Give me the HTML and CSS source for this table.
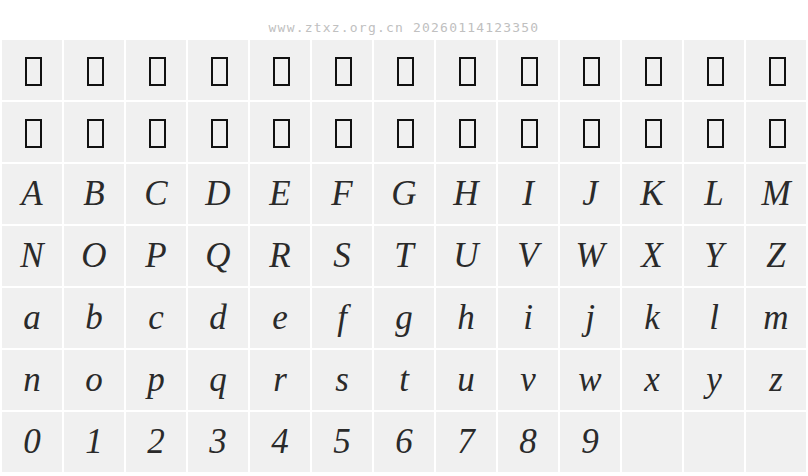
FILE: index.html
```html
<!DOCTYPE html>
<html>
<head>
<meta charset="utf-8">
<link rel="stylesheet" href="styles.css">
</head>
<body>
<header class="site">www.ztxz.org.cn 20260114123350</header>
<main class="grid">
  <div class="cell"><span class="tofu"></span></div>
  <div class="cell"><span class="tofu"></span></div>
  <div class="cell"><span class="tofu"></span></div>
  <div class="cell"><span class="tofu"></span></div>
  <div class="cell"><span class="tofu"></span></div>
  <div class="cell"><span class="tofu"></span></div>
  <div class="cell"><span class="tofu"></span></div>
  <div class="cell"><span class="tofu"></span></div>
  <div class="cell"><span class="tofu"></span></div>
  <div class="cell"><span class="tofu"></span></div>
  <div class="cell"><span class="tofu"></span></div>
  <div class="cell"><span class="tofu"></span></div>
  <div class="cell"><span class="tofu"></span></div>
  <div class="cell"><span class="tofu"></span></div>
  <div class="cell"><span class="tofu"></span></div>
  <div class="cell"><span class="tofu"></span></div>
  <div class="cell"><span class="tofu"></span></div>
  <div class="cell"><span class="tofu"></span></div>
  <div class="cell"><span class="tofu"></span></div>
  <div class="cell"><span class="tofu"></span></div>
  <div class="cell"><span class="tofu"></span></div>
  <div class="cell"><span class="tofu"></span></div>
  <div class="cell"><span class="tofu"></span></div>
  <div class="cell"><span class="tofu"></span></div>
  <div class="cell"><span class="tofu"></span></div>
  <div class="cell"><span class="tofu"></span></div>
  <div class="cell">A</div><div class="cell">B</div><div class="cell">C</div><div class="cell">D</div><div class="cell">E</div><div class="cell">F</div><div class="cell">G</div><div class="cell">H</div><div class="cell">I</div><div class="cell">J</div><div class="cell">K</div><div class="cell">L</div><div class="cell">M</div>
  <div class="cell">N</div><div class="cell">O</div><div class="cell">P</div><div class="cell">Q</div><div class="cell">R</div><div class="cell">S</div><div class="cell">T</div><div class="cell">U</div><div class="cell">V</div><div class="cell">W</div><div class="cell">X</div><div class="cell">Y</div><div class="cell">Z</div>
  <div class="cell">a</div><div class="cell">b</div><div class="cell">c</div><div class="cell">d</div><div class="cell">e</div><div class="cell">f</div><div class="cell">g</div><div class="cell">h</div><div class="cell">i</div><div class="cell">j</div><div class="cell">k</div><div class="cell">l</div><div class="cell">m</div>
  <div class="cell">n</div><div class="cell">o</div><div class="cell">p</div><div class="cell">q</div><div class="cell">r</div><div class="cell">s</div><div class="cell">t</div><div class="cell">u</div><div class="cell">v</div><div class="cell">w</div><div class="cell">x</div><div class="cell">y</div><div class="cell">z</div>
  <div class="cell">0</div><div class="cell">1</div><div class="cell">2</div><div class="cell">3</div><div class="cell">4</div><div class="cell">5</div><div class="cell">6</div><div class="cell">7</div><div class="cell">8</div><div class="cell">9</div><div class="cell"></div><div class="cell"></div><div class="cell"></div>
</main>
</body>
</html>
```
FILE: styles.css
```css
html, body {
  margin: 0;
  padding: 0;
  background: #ffffff;
}

.site {
  height: 40px;
  box-sizing: border-box;
  padding-top: 20px;
  text-align: center;
  font-family: "DejaVu Sans Mono", monospace;
  font-size: 13px;
  letter-spacing: 1.2px;
  line-height: 15px;
  color: #c0c0c0;
}

.grid {
  display: grid;
  grid-template-columns: repeat(13, 60px);
  grid-auto-rows: 60px;
  gap: 2px;
  padding-left: 2px;
}

.cell {
  background: #f0f0f0;
  text-align: center;
  font-family: "Liberation Serif", serif;
  font-style: italic;
  font-size: 35px;
  line-height: 60px;
  color: #2a2a2a;
}

.tofu {
  display: inline-block;
  box-sizing: border-box;
  width: 17px;
  height: 29px;
  border: 2px solid #111;
  margin-left: 3px;
  vertical-align: middle;
  position: relative;
  top: -1px;
}
```
